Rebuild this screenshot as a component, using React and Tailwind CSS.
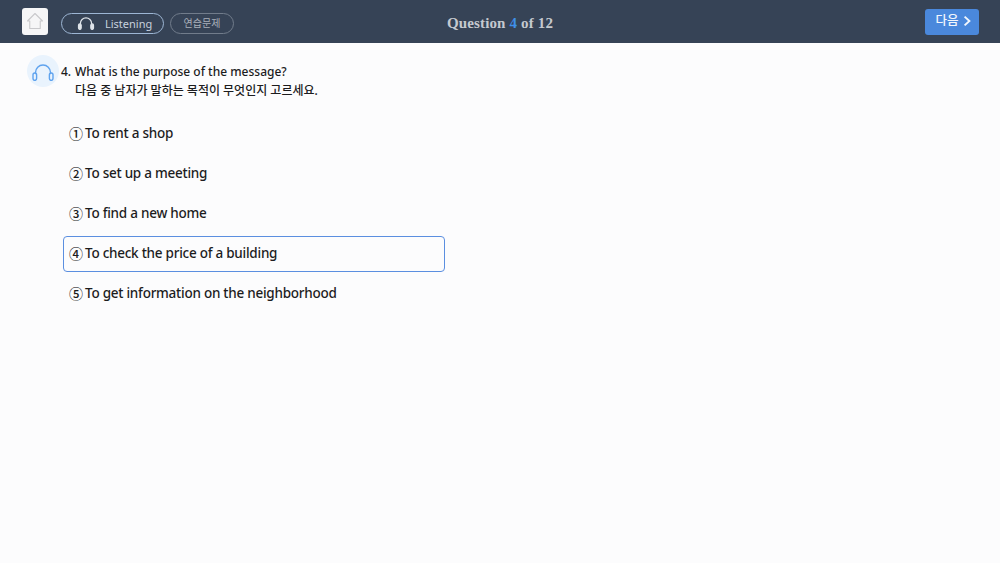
const SANS = "font-['Noto_Sans','Noto_Sans_CJK_KR',sans-serif]"

const OPTIONS = [
  { mark: '①', text: 'To rent a shop' },
  { mark: '②', text: 'To set up a meeting' },
  { mark: '③', text: 'To find a new home' },
  { mark: '④', text: 'To check the price of a building', selected: true },
  { mark: '⑤', text: 'To get information on the neighborhood' },
]

function Headphones({ className, strokeWidth = 2, cupFill = 'none' }) {
  return (
    <svg viewBox="0 0 24 17" fill="none" stroke="currentColor" strokeWidth={strokeWidth} strokeLinecap="round" strokeLinejoin="round" className={className}>
      <path d="M4.5 9.5V8.5a7.5 7.5 0 0 1 15 0v1" />
      <rect x="2" y="9" width="3.6" height="7.4" rx="1.8" fill={cupFill} />
      <rect x="18.4" y="9" width="3.6" height="7.4" rx="1.8" fill={cupFill} />
    </svg>
  )
}

export default function App() {
  return (
    <div className={`flex h-[563px] w-[1000px] flex-col overflow-hidden bg-[#fcfcfd] ${SANS}`}>
      <header className="relative flex h-[43px] shrink-0 items-center justify-between bg-[#364356] pl-[22px] pr-[21px]">
        <div className="flex items-center">
          <div className="mb-[1px] flex h-[27px] w-[26px] items-center justify-center rounded-[3px] bg-[#f6f6f7]">
            <svg viewBox="0 0 24 24" fill="none" stroke="#c9c9cc" strokeWidth="1.5" strokeLinejoin="round" className="h-[18px] w-[18px]">
              <path d="M2 12 12 2l10 10h-3v10H5V12z" />
            </svg>
          </div>
          <div className="ml-[13px] mt-[3px] flex h-[21px] w-[103px] items-center rounded-full border border-[#9db6d4] pl-[15px]">
            <Headphones className="h-[13px] w-[18px] text-[#dfe4ea]" strokeWidth={1.6} cupFill="#dfe4ea" />
            <span className="ml-[10px] text-[11px] leading-none text-[#c8d2de]">Listening</span>
          </div>
          <div className="ml-[6px] mt-[3px] flex h-[21px] w-[64px] items-center justify-center rounded-full border border-[#717c8b] text-[10px] leading-none text-[#a9b0ba]">
            연습문제
          </div>
        </div>
        <h1 className="absolute inset-x-0 top-0 text-center font-['Liberation_Serif',serif] text-[15px] font-bold leading-[46px] tracking-[0.15px] text-[#c5c9cf]">
          Question <span className="text-[#3f8fe8]">4</span> of 12
        </h1>
        <button className="relative mt-[1px] flex h-[26px] w-[54px] items-center justify-center rounded-[3px] bg-[#4a88dc] pb-[2px] pl-[2px] text-[12.5px] font-medium leading-none text-[#f2f6fc]">
          다음
          <svg viewBox="0 0 10 14" fill="none" stroke="currentColor" strokeWidth="2.4" className="ml-[4px] h-[12px] w-[8px]">
            <path d="M2 1.5 8 7l-6 5.5" />
          </svg>
        </button>
      </header>

      <main className="flex flex-col pl-[27px] pt-[12px] text-[#1c1c1e]">
        <div className="flex items-start">
          <div className="flex h-[32px] w-[32px] shrink-0 items-center justify-center rounded-full bg-[#e9f3fd]">
            <Headphones className="mt-[2px] h-[17px] w-[24px] text-[#5fa3ee]" strokeWidth={1.4} />
          </div>
          <p className="ml-[2px] mt-[7px] w-[14px] text-[12px] font-medium leading-[19px]">4.</p>
          <div className="mt-[7px] text-[12px] font-medium leading-[19px]">
            <p>What is the purpose of the message?</p>
            <p>다음 중 남자가 말하는 목적이 무엇인지 고르세요.</p>
          </div>
        </div>

        <ul className="ml-[36px] mt-[16px] flex w-[382px] flex-col gap-[4px]">
          {OPTIONS.map((o) => (
            <li
              key={o.mark}
              className={`flex h-[36px] items-center rounded-[4px] border pb-[1px] pl-[5px] text-[13.5px] font-medium leading-none tracking-[-0.25px] ${o.selected ? 'border-[#5b8fe0]' : 'border-transparent'}`}
            >
              <span className="w-[16px] text-[14px]">{o.mark}</span>
              <span>{o.text}</span>
            </li>
          ))}
        </ul>
      </main>
    </div>
  )
}
